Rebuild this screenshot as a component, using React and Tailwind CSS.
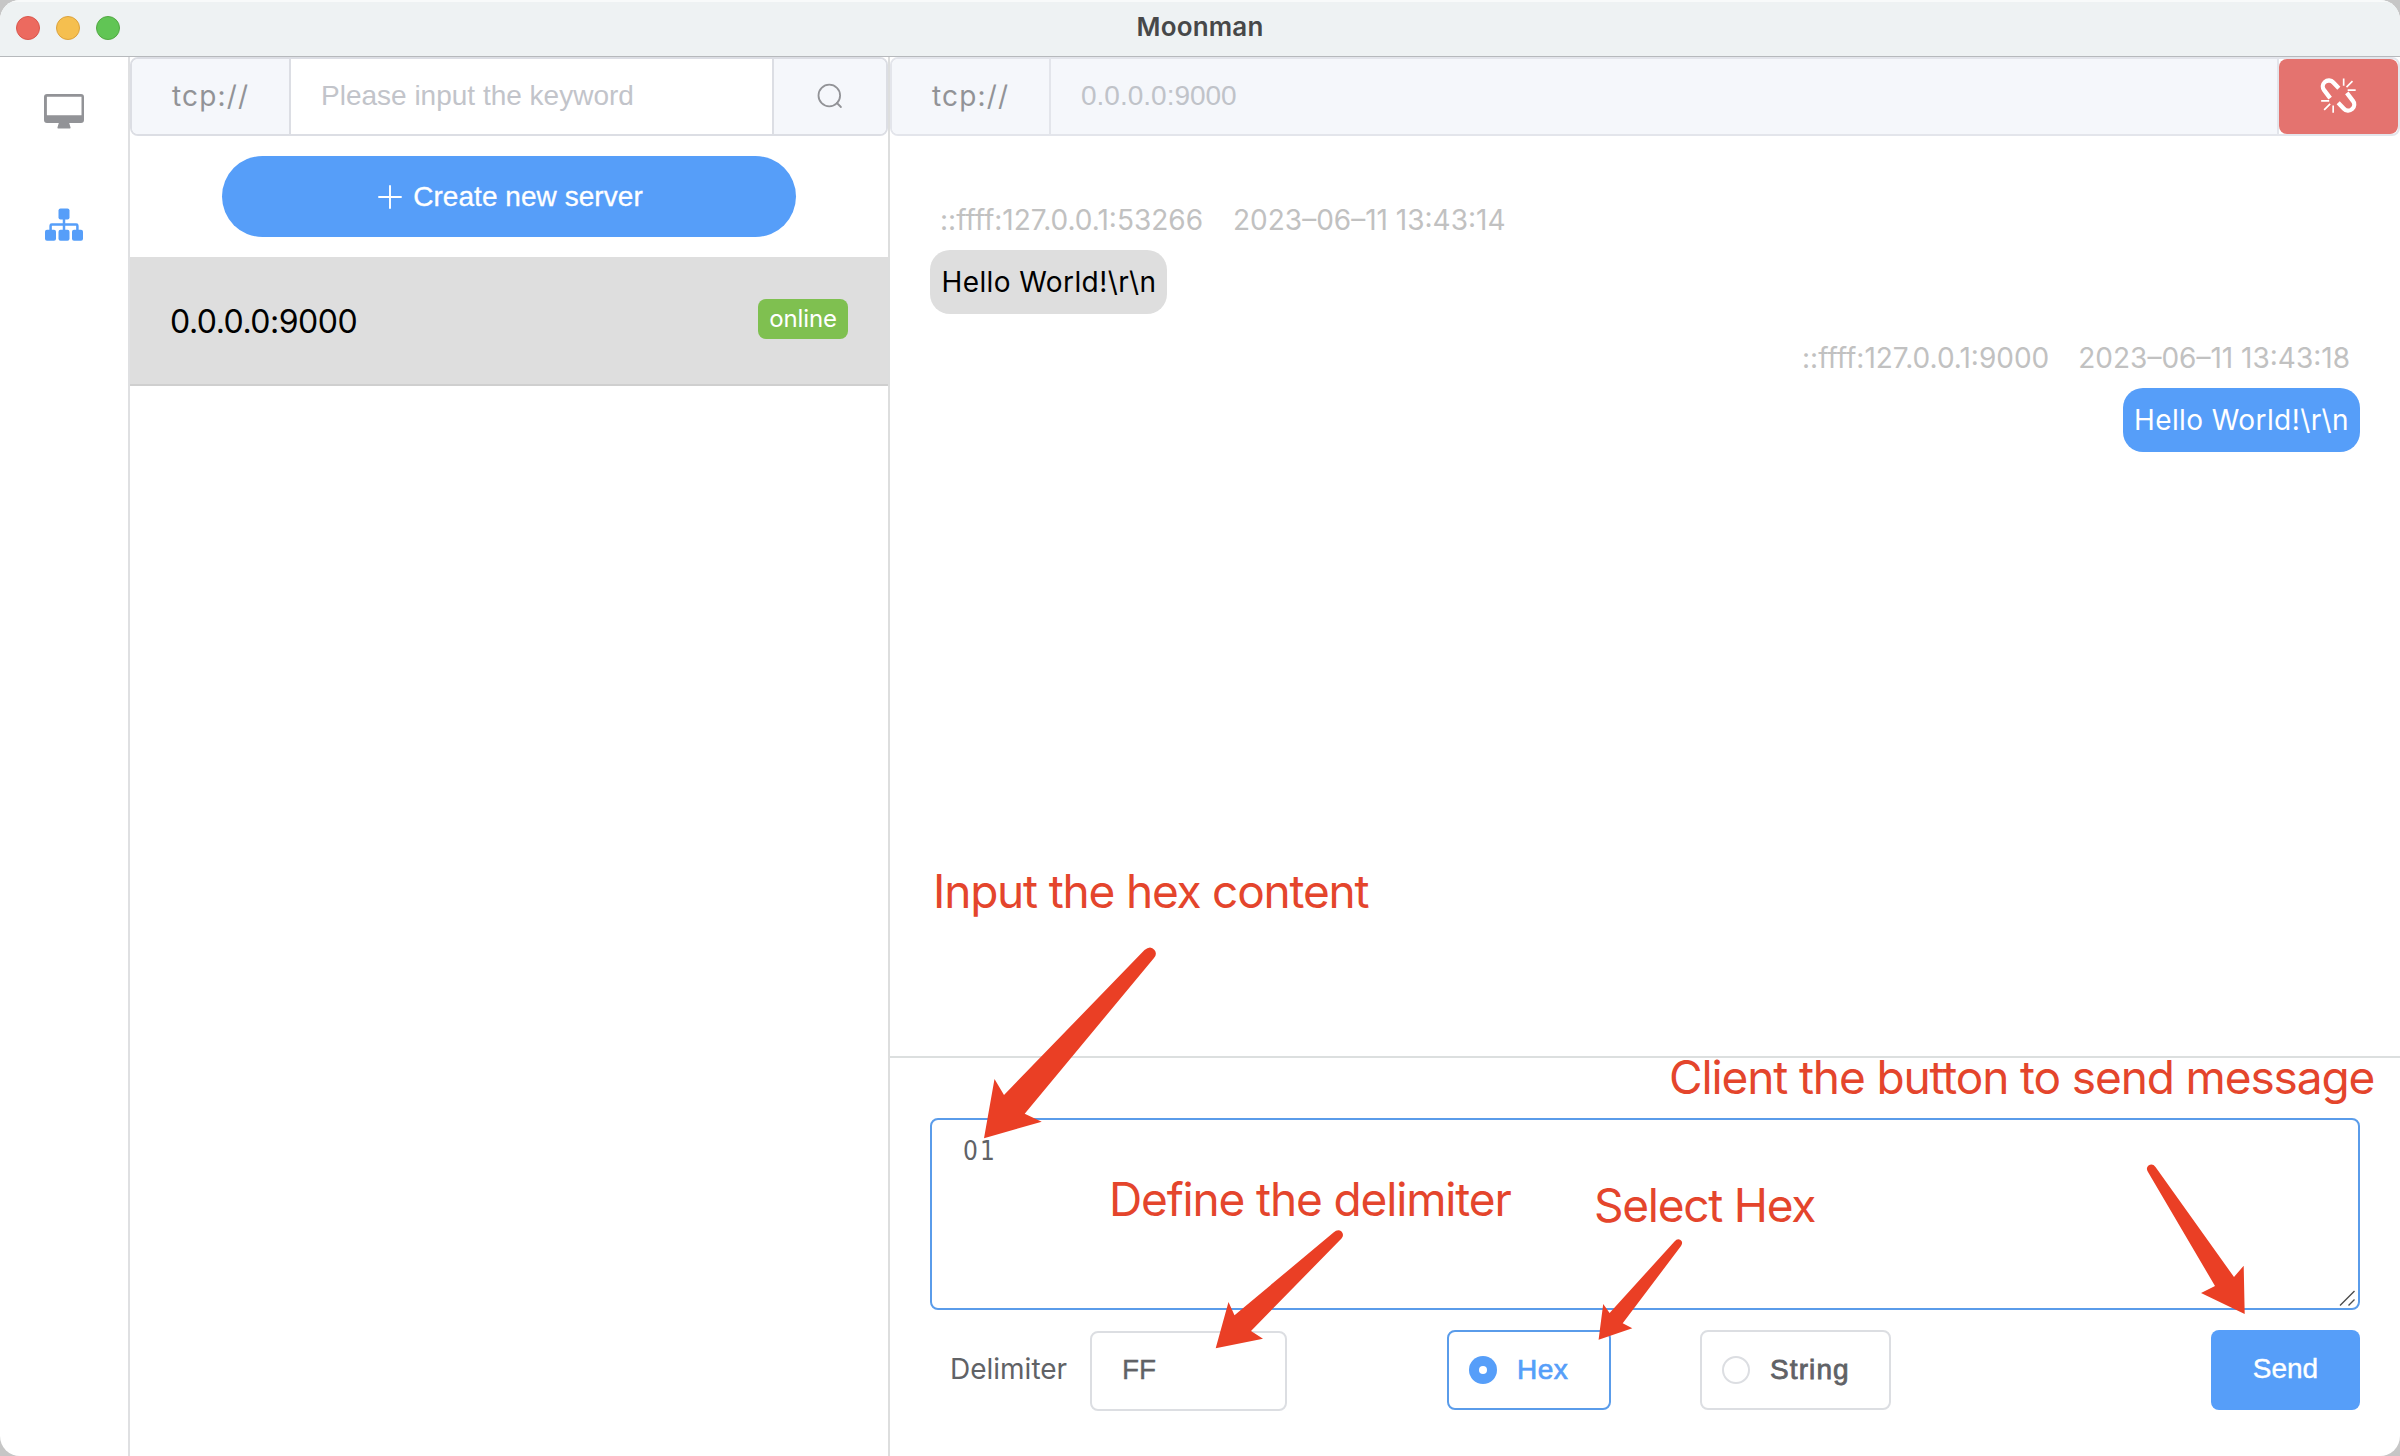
import React from "react";

const MonitorIcon = () => (
  <svg width="42" height="36" viewBox="43 93 42 36" className="text-[#929397]">
    <path
      fill="currentColor"
      fillRule="evenodd"
      d="M47 94h34a3 3 0 0 1 3 3v23a3 3 0 0 1-3 3H69.2l1.3 4.2c.2.8-.2 1.4-1 1.4H58.500c-.8 0-1.200-.6-1-1.400L58.800 123H47a3 3 0 0 1-3-3V97a3 3 0 0 1 3-3zm-.1 2.700v18.500h34.600V96.700z"
    />
  </svg>
);

const SitemapIcon = () => (
  <svg width="40" height="34" viewBox="44 208 40 34" fill="#569ef9">
    <rect x="58.500" y="208.600" width="11" height="10.800" rx="2" />
    <rect x="45" y="229.800" width="11" height="11" rx="2" />
    <rect x="58.500" y="229.800" width="11" height="11" rx="2" />
    <rect x="72" y="229.800" width="11" height="11" rx="2" />
    <path
      d="M64 219v11M50.600 230v-4.300a1.200 1.200 0 0 1 1.200-1.200h24.400a1.200 1.200 0 0 1 1.200 1.200v4.300"
      fill="none"
      stroke="#569ef9"
      strokeWidth="2.500"
    />
  </svg>
);

const PlusIcon = () => (
  <svg width="24" height="24" viewBox="0 0 24 24" stroke="#fff" strokeWidth="1.900" strokeLinecap="round">
    <path d="M12 1v22M1 12h22" />
  </svg>
);

const SearchIcon = () => (
  <svg width="26" height="26" viewBox="0 0 26 26" fill="none" stroke="#929397" strokeWidth="1.800" strokeLinecap="round">
    <circle cx="12.300" cy="12.500" r="10.800" />
    <path d="M19.900 20l4 4" />
  </svg>
);

const UnlinkIcon = () => (
  <svg width="37" height="37" viewBox="180.500 80.500 111 111" fill="none" stroke="#fff">
    <g strokeWidth="13">
      <path d="M211 144L193.500 121A17 17 0 0 1 220.500 97L237 114" />
      <path d="M261 128L278.500 151A17 17 0 0 1 251.500 175L235 158" />
    </g>
    <g strokeWidth="5">
      <path d="M251.500 85v22M278 93l-18 18M287.500 120h-24M184 152h24M211 161l-18 18M220 166v22" />
    </g>
  </svg>
);

const ARROWS = [
  "M984 1138.300L994.500 1079L1004 1095L1144.500 950Q1150.500 945 1154.500 950Q1157.500 954 1154 958L1024.700 1113.700L1041.700 1121.700Z",
  "M1215.700 1348.300L1228.500 1302L1234.500 1315.300L1333.500 1232.500Q1338 1228.500 1341.500 1231.500Q1344.500 1235 1341.500 1238.500L1251 1331L1263 1338.700Z",
  "M1598.600 1339.700L1603.200 1304L1609.600 1313L1674.500 1241.500Q1677.500 1238 1680.500 1240Q1683.500 1242 1681 1246L1622.700 1323.300L1632.300 1328.300Z",
  "M2244.700 1314L2243.700 1265.700L2234 1277L2155.500 1167Q2152.500 1163 2148.500 1165.500Q2145.500 1168 2148 1172L2215 1286L2201 1293Z",
];

const Arrows = () => (
  <svg className="pointer-events-none absolute inset-0" width="2400" height="1456" viewBox="0 0 2400 1456" fill="#ea3f25">
    {ARROWS.map((d) => (
      <path key={d} d={d} />
    ))}
  </svg>
);

const NOTE = "pointer-events-none absolute whitespace-nowrap text-[46px] leading-[60px] text-[#e4452c]";

function Prefix({ className = "" }) {
  return (
    <div className={"flex h-full w-[159px] shrink-0 items-center border-r-2 bg-[#f5f7fb] pb-px pl-[40px] text-[28px] tracking-[1.16px] text-[#929397] " + className}>
      tcp://
    </div>
  );
}

export default function App() {
  return (
    <div className="relative h-[1456px] w-[2400px] overflow-hidden bg-[#c6c6c6] font-['Inter',sans-serif]">
      <div className="flex h-full flex-col overflow-hidden rounded-[20px] bg-white">
        <header className="relative flex h-[57px] shrink-0 items-center justify-center border-t-2 border-b border-t-[#f8fafa] border-b-[#b6b9bc] bg-[#eef2f3] pb-[4px]">
          <div className="absolute left-4 top-[14px] flex gap-4">
            <span className="size-6 rounded-full border border-[#d9574d] bg-[#ec6a5f]" />
            <span className="size-6 rounded-full border border-[#dba23d] bg-[#f5bf4f]" />
            <span className="size-6 rounded-full border border-[#52a843] bg-[#61c555]" />
          </div>
          <h1 className="text-[26px] font-semibold leading-8 tracking-[0.18px] text-[#474849]">Moonman</h1>
        </header>

        <div className="flex min-h-0 flex-1">
          <nav className="flex w-[130px] shrink-0 flex-col items-center border-r-2 border-[#dfe0e2] pt-[36px]">
            <MonitorIcon />
            <div className="h-[79px]" />
            <SitemapIcon />
          </nav>

          <aside className="flex w-[760px] shrink-0 flex-col border-r-2 border-[#dddede]">
            <div className="flex h-[79px] shrink-0 overflow-hidden rounded-lg border-2 border-[#dcdee4]">
              <Prefix className="border-[#dcdee4]" />
              <div className="flex flex-1 items-center pb-[2px] pl-[30px] font-['Liberation_Sans',sans-serif] text-[28px] text-[#c2c4ca]">
                Please input the keyword
              </div>
              <div className="flex w-[114px] items-center justify-center border-l-2 border-[#dcdee4] bg-[#f5f7fb] pb-[2px]">
                <SearchIcon />
              </div>
            </div>
            <button className="ml-[92px] mt-5 flex h-[81px] w-[574px] shrink-0 items-center justify-center gap-[11px] rounded-full bg-[#569ef9] pl-[3px] font-['Liberation_Sans',sans-serif] text-[28px] tracking-[0.05px] text-white [-webkit-text-stroke:0.3px_white]">
              <PlusIcon />
              Create new server
            </button>
            <div className="mt-5 flex h-[129px] shrink-0 items-center justify-between border-b-2 border-[#cfcfcf] bg-[#dedede] pl-10 pr-10">
              <span className="pt-[2px] text-[32px] tracking-[-0.5px] text-black">0.0.0.0:9000</span>
              <span className="relative top-[-2px] flex h-10 w-[90px] items-center justify-center rounded-lg bg-[#7fc050] pt-px text-2xl tracking-[-0.13px] text-white">
                online
              </span>
            </div>
          </aside>

          <main className="flex min-w-0 flex-1 flex-col">
            <div className="flex h-[79px] shrink-0 overflow-hidden rounded-lg border-2 border-[#e3e5eb]">
              <Prefix className="border-[#e3e5eb]" />
              <div className="flex flex-1 items-center border-r-2 border-[#e3e5eb] bg-[#f5f7fb] pb-[2px] pl-[30px] font-['Liberation_Sans',sans-serif] text-[28px] text-[#c0c3c9]">
                0.0.0.0:9000
              </div>
              <button className="flex w-[119px] items-center justify-center rounded-lg bg-[#e4736f] pb-[2px]">
                <UnlinkIcon />
              </button>
            </div>

            <section className="flex h-[922px] shrink-0 flex-col gap-6 border-b-2 border-[#dcdfdf] px-10 pt-16">
              <div className="flex flex-col items-start">
                <div className="flex h-10 items-center gap-[30px] pl-[10px] text-[28px] text-[#c1c1c1]">
                  <span>::ffff:127.0.0.1:53266</span>
                  <span>2023–06–11 13:43:14</span>
                </div>
                <div className="mt-[10px] flex h-16 w-[237px] items-center justify-center rounded-[20px] bg-[#dedede] pl-px text-[28px] tracking-[0.41px] text-black">
                  Hello World!\r\n
                </div>
              </div>
              <div className="flex flex-col items-end">
                <div className="flex h-10 items-center gap-[29px] pr-[10px] text-[28px] text-[#c1c1c1]">
                  <span>::ffff:127.0.0.1:9000</span>
                  <span>2023–06–11 13:43:18</span>
                </div>
                <div className="mt-[10px] flex h-16 w-[237px] items-center justify-center rounded-[20px] bg-[#569ef9] text-[28px] tracking-[0.41px] text-white">
                  Hello World!\r\n
                </div>
              </div>
            </section>

            <section className="flex flex-col px-10 pt-[60px]">
              <div className="relative h-[192px] rounded-lg border-2 border-[#5a9cea] pl-[31px] pt-[15px] font-['DejaVu_Sans_Condensed','DejaVu_Sans',sans-serif] text-[26px] leading-8 tracking-[2px] text-[#606266]">
                01
                <svg className="absolute bottom-0 right-0" width="20" height="20" viewBox="0 0 20 20" stroke="#4d4d4d" strokeWidth="1.400">
                  <path d="M2 17.500L16.500 3M10.500 17.500L16.500 11.500" />
                </svg>
              </div>
              <div className="mt-5 flex h-[81px] items-start">
                <label className="ml-5 w-[140px] pt-[19px] text-[28px] leading-10 text-[#606266]">Delimiter</label>
                <div className="mt-px flex h-[80px] w-[197px] items-center rounded-lg border-2 border-[#dcdee2] pb-[2px] pl-[30px] font-['Liberation_Sans',sans-serif] text-[28px] text-[#606266] [-webkit-text-stroke:0.3px_#606266]">
                  FF
                </div>
                <div className="ml-[160px] flex h-20 w-[164px] items-center rounded-lg border-2 border-[#5a9cea] pl-5 font-['Liberation_Sans',sans-serif] text-[28px] tracking-[0.5px] text-[#569ef9]">
                  <span className="mr-5 flex size-7 items-center justify-center rounded-full bg-[#569ef9]">
                    <span className="size-2 rounded-full bg-white" />
                  </span>
                  <span className="[-webkit-text-stroke:0.7px_#569ef9]">Hex</span>
                </div>
                <div className="ml-[89px] flex h-20 w-[191px] items-center rounded-lg border-2 border-[#dcdee2] pl-5 font-['Liberation_Sans',sans-serif] text-[28px] tracking-[1.1px] text-[#606266]">
                  <span className="mr-5 size-7 rounded-full border-2 border-[#dcdee2]" />
                  <span className="[-webkit-text-stroke:0.8px_#606266]">String</span>
                </div>
                <button className="ml-auto flex h-20 w-[149px] items-center justify-center rounded-lg bg-[#569ef9] pb-[2px] font-['Liberation_Sans',sans-serif] text-[28px] text-white [-webkit-text-stroke:0.4px_white]">
                  Send
                </button>
              </div>
            </section>
          </main>
        </div>
      </div>

      <p className={NOTE + " left-[933px] top-[861px] tracking-[-1.2px]"}>Input the hex content</p>
      <p className={NOTE + " left-[1109px] top-[1169px] tracking-[-1.15px]"}>Define the delimiter</p>
      <p className={NOTE + " left-[1594px] top-[1175px] tracking-[-1.25px]"}>Select Hex</p>
      <p className={NOTE + " left-[1669px] top-[1047px] tracking-[-1.13px]"}>Client the button to send message</p>
      <Arrows />
    </div>
  );
}
